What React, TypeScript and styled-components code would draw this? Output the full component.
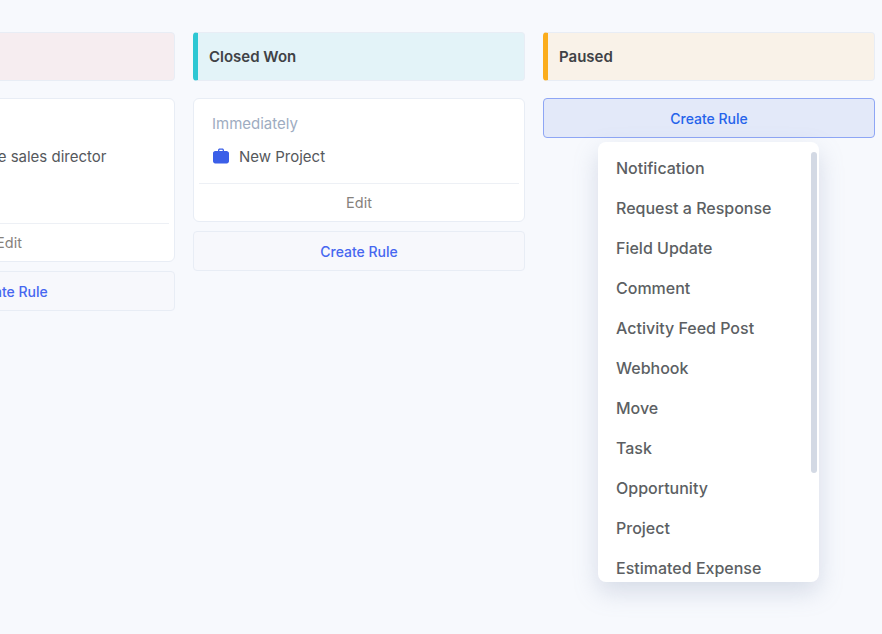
import { createGlobalStyle, styled } from 'styled-components';

const GlobalStyle = createGlobalStyle`
  html, body {
    margin: 0;
    padding: 0;
    height: 100%;
    overflow: hidden;
    background: #f7f9fd;
    font-family: Inter, "Liberation Sans", sans-serif;
  }
  * {
    box-sizing: border-box;
  }
`;

const Board = styled.div`
  display: flex;
  align-items: flex-start;
  gap: 18px;
  width: 1100px;
  margin-left: -157px;
  padding-top: 32px;
`;

const Column = styled.div`
  position: relative;
  display: flex;
  flex-direction: column;
  width: 332px;
  flex: none;
`;

const Header = styled.div<{ $bg: string; $accent?: string }>`
  display: flex;
  align-items: center;
  height: 49px;
  padding-left: 11px;
  margin-bottom: 17px;
  background: ${(p) => p.$bg};
  border: 1px solid #e8edf5;
  border-left: ${(p) => (p.$accent ? `5px solid ${p.$accent}` : '1px solid #e8edf5')};
  border-radius: 4px;
  font-size: 15px;
  font-weight: 600;
  color: #3f4246;
`;

const Card = styled.div`
  display: flex;
  flex-direction: column;
  background: #fff;
  border: 1px solid #e8edf5;
  border-radius: 6px;
  margin-bottom: 9px;
`;

const CardBody = styled.div<{ $height: number }>`
  height: ${(p) => p.$height}px;
  padding: 15px 18px 0;
`;

const Timing = styled.div`
  height: 20px;
  line-height: 20px;
  font-size: 15px;
  color: #9eacc1;
`;

const Action = styled.div`
  display: flex;
  align-items: center;
  gap: 9px;
  height: 20px;
  margin-top: 13px;
  font-size: 15px;
  line-height: 20px;
  color: #55585c;
`;

const ActionIcon = styled.svg`
  width: 18px;
  height: 18px;
  flex: none;
  margin-top: -3px;
`;

const EditRow = styled.div`
  margin: 0 5px;
  height: 38px;
  border-top: 1px solid #edf0f5;
  display: flex;
  align-items: center;
  justify-content: center;
  font-size: 14.5px;
  color: #85817c;
`;

const CreateButton = styled.button<{ $active?: boolean }>`
  width: 100%;
  height: 40px;
  padding: 0;
  font-family: inherit;
  font-size: 14px;
  font-weight: 500;
  cursor: pointer;
  border-radius: 4px;
  border: 1px solid ${(p) => (p.$active ? '#8ea6f5' : '#e8edf5')};
  background: ${(p) => (p.$active ? '#e3e9f9' : '#f7f8fc')};
  color: ${(p) => (p.$active ? '#2563eb' : '#4667f0')};
`;

const Menu = styled.div`
  position: absolute;
  top: 110px;
  left: 55px;
  width: 221px;
  height: 440px;
  overflow: hidden;
  background: #fff;
  border-radius: 8px;
  padding-top: 6px;
  box-shadow: 0 10px 24px rgba(130, 142, 175, 0.28);
`;

const MenuItem = styled.div`
  height: 40px;
  line-height: 40px;
  padding-left: 18px;
  font-size: 16px;
  font-weight: 500;
  color: #5c5f63;
`;

const ScrollThumb = styled.div`
  position: absolute;
  top: 10px;
  right: 2px;
  width: 6px;
  height: 321px;
  border-radius: 3px;
  background: #d3d9e4;
`;

const menuItems = [
  'Notification',
  'Request a Response',
  'Field Update',
  'Comment',
  'Activity Feed Post',
  'Webhook',
  'Move',
  'Task',
  'Opportunity',
  'Project',
  'Estimated Expense',
];

const App = () => (
  <>
    <GlobalStyle />
    <Board>
      <Column>
        <Header $bg="#f6edf0" />
        <Card>
          <CardBody $height={124}>
            <Timing />
            <Action>Send an email to the sales director</Action>
          </CardBody>
          <EditRow>Edit</EditRow>
        </Card>
        <CreateButton>Create Rule</CreateButton>
      </Column>
      <Column>
        <Header $bg="#e3f3f8" $accent="#2ec7d3">
          Closed Won
        </Header>
        <Card>
          <CardBody $height={84}>
            <Timing>Immediately</Timing>
            <Action>
              <ActionIcon viewBox="0 0 18 18">
                <path
                  fill="#3b5fe8"
                  d="M6 3.2C6 2.2 6.8 1.5 7.7 1.5h2.6c.9 0 1.7.7 1.7 1.7V4h2.6C15.6 4 17 5 17 6.2v8.1c0 1.2-1 2.2-2.2 2.2H3.2C2 16.500 1 15.500 1 14.300V6.200C1 5 2 4 3.200 4H6v-.8zM7.300 4h3.400v-.8c0-.2-.2-.4-.4-.4H7.700c-.2 0-.4.2-.4.4V4z"
                />
              </ActionIcon>
              New Project
            </Action>
          </CardBody>
          <EditRow>Edit</EditRow>
        </Card>
        <CreateButton>Create Rule</CreateButton>
      </Column>
      <Column>
        <Header $bg="#f9f2e8" $accent="#fbad1c">
          Paused
        </Header>
        <CreateButton $active>Create Rule</CreateButton>
        <Menu>
          {menuItems.map((item) => (
            <MenuItem key={item}>{item}</MenuItem>
          ))}
          <ScrollThumb />
        </Menu>
      </Column>
    </Board>
  </>
);

export default App;
